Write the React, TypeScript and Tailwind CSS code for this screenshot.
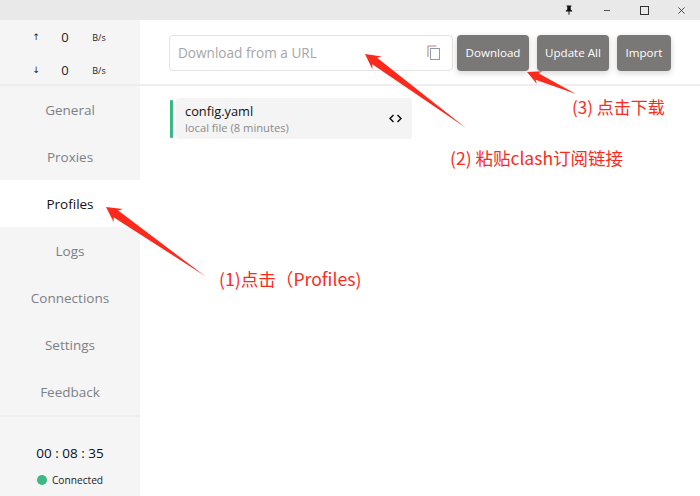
import React from "react";

const navItems = ["General", "Proxies", "Profiles", "Logs", "Connections", "Settings", "Feedback"];
const activeIndex = 2;

function Arrow({ tail, tip, neckWidth = 4, head = 15, barb = 8 }: { tail: [number, number]; tip: [number, number]; neckWidth?: number; head?: number; barb?: number }) {
  const dx = tip[0] - tail[0];
  const dy = tip[1] - tail[1];
  const len = Math.hypot(dx, dy);
  const ux = dx / len;
  const uy = dy / len;
  const nx = -uy;
  const ny = ux;
  const base = [tip[0] - ux * head, tip[1] - uy * head];
  const neck = [tip[0] - ux * (head - 3), tip[1] - uy * (head - 3)];
  const pts = [
    tail,
    [neck[0] + nx * neckWidth, neck[1] + ny * neckWidth],
    [base[0] + nx * barb, base[1] + ny * barb],
    tip,
    [base[0] - nx * barb, base[1] - ny * barb],
    [neck[0] - nx * neckWidth, neck[1] - ny * neckWidth],
  ];
  return <polygon points={pts.map((p) => p.join(",")).join(" ")} fill="#fb2a1c" />;
}

function Speed({ arrow }: { arrow: string }) {
  return (
    <div className="flex items-center h-[33px] shrink-0 text-[#222]">
      <span className="w-[40px] text-right text-[9px] font-['DejaVu_Sans',sans-serif]">{arrow}</span>
      <span className="w-[50px] text-center text-[13px]">0</span>
      <span className="w-[18px] text-center text-[9px] whitespace-nowrap">B/s</span>
    </div>
  );
}

export default function App() {
  return (
    <div className="relative w-[700px] h-[496px] overflow-hidden bg-white flex flex-col font-['Open_Sans','Noto_Sans_CJK_SC',sans-serif]">
      {/* Title bar */}
      <div className="h-[20px] bg-[#e9e9e9] flex items-center justify-end shrink-0">
        <svg className="w-[8px] h-[10px] mr-[31px]" viewBox="0 0 10 12">
          <path d="M2 0.5h6v1H7.200v4L9 7v1H5.600v4h-1.200V8H1V7l1.800-1.500v-4H2z" fill="#111" />
        </svg>
        <div className="w-[6px] h-[1px] bg-[#555] mr-[30px]" />
        <div className="w-[9px] h-[9px] border border-[#333] mr-[29px]" />
        <svg className="w-[7px] h-[7px] mr-[15px]" viewBox="0 0 8 8">
          <path d="M0.500 0.500L7.500 7.500M7.500 0.500L0.500 7.500" stroke="#333" strokeWidth="1" />
        </svg>
      </div>

      <div className="flex flex-1 min-h-0">
        {/* Sidebar */}
        <aside className="w-[140px] shrink-0 flex flex-col">
          <div className="h-[66px] bg-[#f5f5f5] border-b-2 border-[#eeeeee] pt-[1px] flex flex-col justify-start">
            <Speed arrow="↑" />
            <Speed arrow="↓" />
          </div>
          {navItems.map((item, i) => (
            <div key={item} className="bg-[#f5f5f5]">
              <div
                className={`h-[47px] pt-[1px] flex items-center justify-center text-[13.5px] ${
                  i === activeIndex
                    ? "bg-white text-[#111]"
                    : i === activeIndex - 1
                    ? "bg-[#f5f5f5] text-[#7b8088] rounded-br-[10px]"
                    : "bg-[#f5f5f5] text-[#7b8088]"
                }`}
              >
                {item}
              </div>
            </div>
          ))}
          <div className="flex-1 bg-[#f5f5f5] border-t-2 border-[#eeeeee] flex flex-col items-center pt-[26px]">
            <div className="text-[13.5px] leading-[20px] text-[#111]">00 : 08 : 35</div>
            <div className="flex items-center gap-[5px] mt-[10px] text-[10.2px] leading-[14px] text-[#222]">
              <span className="w-[10px] h-[10px] rounded-full bg-[#3cb983]" />
              Connected
            </div>
          </div>
        </aside>

        {/* Main */}
        <main className="flex-1 flex flex-col">
          <div className="h-[66px] border-b-2 border-[#eeeeee] flex items-start pt-[15px] pl-[29px] shrink-0">
            <div className="w-[284px] h-[36px] rounded-[4px] border border-[#e3e3e3] flex items-center justify-between pl-[8px] pr-[12px]">
              <span className="text-[13.6px] text-[#a6a6a6]">Download from a URL</span>
              <svg className="w-[13px] h-[16px]" viewBox="0 0 13 16" fill="none">
                <path d="M9.500 1H1v11" stroke="#a8877a" strokeWidth="1" />
                <rect x="3.500" y="3.500" width="9" height="11" stroke="#8f9bb0" strokeWidth="1" />
              </svg>
            </div>
            <button className="ml-[4px] w-[72px] h-[36px] pb-[1px] rounded-[4px] bg-[#7a7876] text-white text-[11.6px] shadow-[0_2px_6px_rgba(0,0,0,0.18)]">Download</button>
            <button className="ml-[8px] w-[72px] h-[36px] pb-[1px] rounded-[4px] bg-[#7a7876] text-white text-[11.6px] shadow-[0_2px_6px_rgba(0,0,0,0.18)]">Update All</button>
            <button className="ml-[8px] w-[54px] h-[36px] pb-[1px] rounded-[4px] bg-[#7a7876] text-white text-[11.6px] shadow-[0_2px_6px_rgba(0,0,0,0.18)]">Import</button>
          </div>

          <div className="pt-[12px] pl-[30px] flex items-center">
            <div className="w-[3px] h-[38px] rounded-[1px] bg-[#3cb983]" />
            <div className="ml-[3px] w-[236px] h-[41px] rounded-[3px] bg-[#f4f4f4] pl-[9px] pr-[10px] flex items-center justify-between">
              <div>
                <div className="text-[12.8px] leading-[18px] text-[#111]">config.yaml</div>
                <div className="text-[11.2px] leading-[16px] text-[#8a8a8a]">local file (8 minutes)</div>
              </div>
              <svg className="w-[13px] h-[9px]" viewBox="0 0 13 9" fill="none">
                <path d="M4.500 1L1 4.500L4.500 8M8.500 1L12 4.500L8.500 8" stroke="#111" strokeWidth="1.500" />
              </svg>
            </div>
          </div>
        </main>
      </div>

      {/* Annotations drawn over the app */}
      <svg className="absolute left-0 top-0 w-[700px] h-[496px] pointer-events-none" viewBox="0 0 700 496">
        <Arrow tail={[205, 276]} tip={[106, 207]} />
        <Arrow tail={[466, 128]} tip={[365, 54]} />
        <Arrow tail={[576, 94]} tip={[527, 72]} neckWidth={3.5} head={14} barb={7} />
      </svg>
      <div className="absolute left-[219px] top-[267px] text-[17.6px] leading-[24px] text-[#fb2a1c] whitespace-nowrap font-['Noto_Sans_CJK_SC',sans-serif]">(1)点击（Profiles)</div>
      <div className="absolute left-[450px] top-[146px] text-[17.5px] leading-[24px] text-[#fb2a1c] whitespace-nowrap font-['Noto_Sans_CJK_SC',sans-serif]">(2) 粘贴clash订阅链接</div>
      <div className="absolute left-[572px] top-[95px] text-[17px] leading-[24px] text-[#fb2a1c] whitespace-nowrap font-['Noto_Sans_CJK_SC',sans-serif]">(3) 点击下载</div>
    </div>
  );
}
